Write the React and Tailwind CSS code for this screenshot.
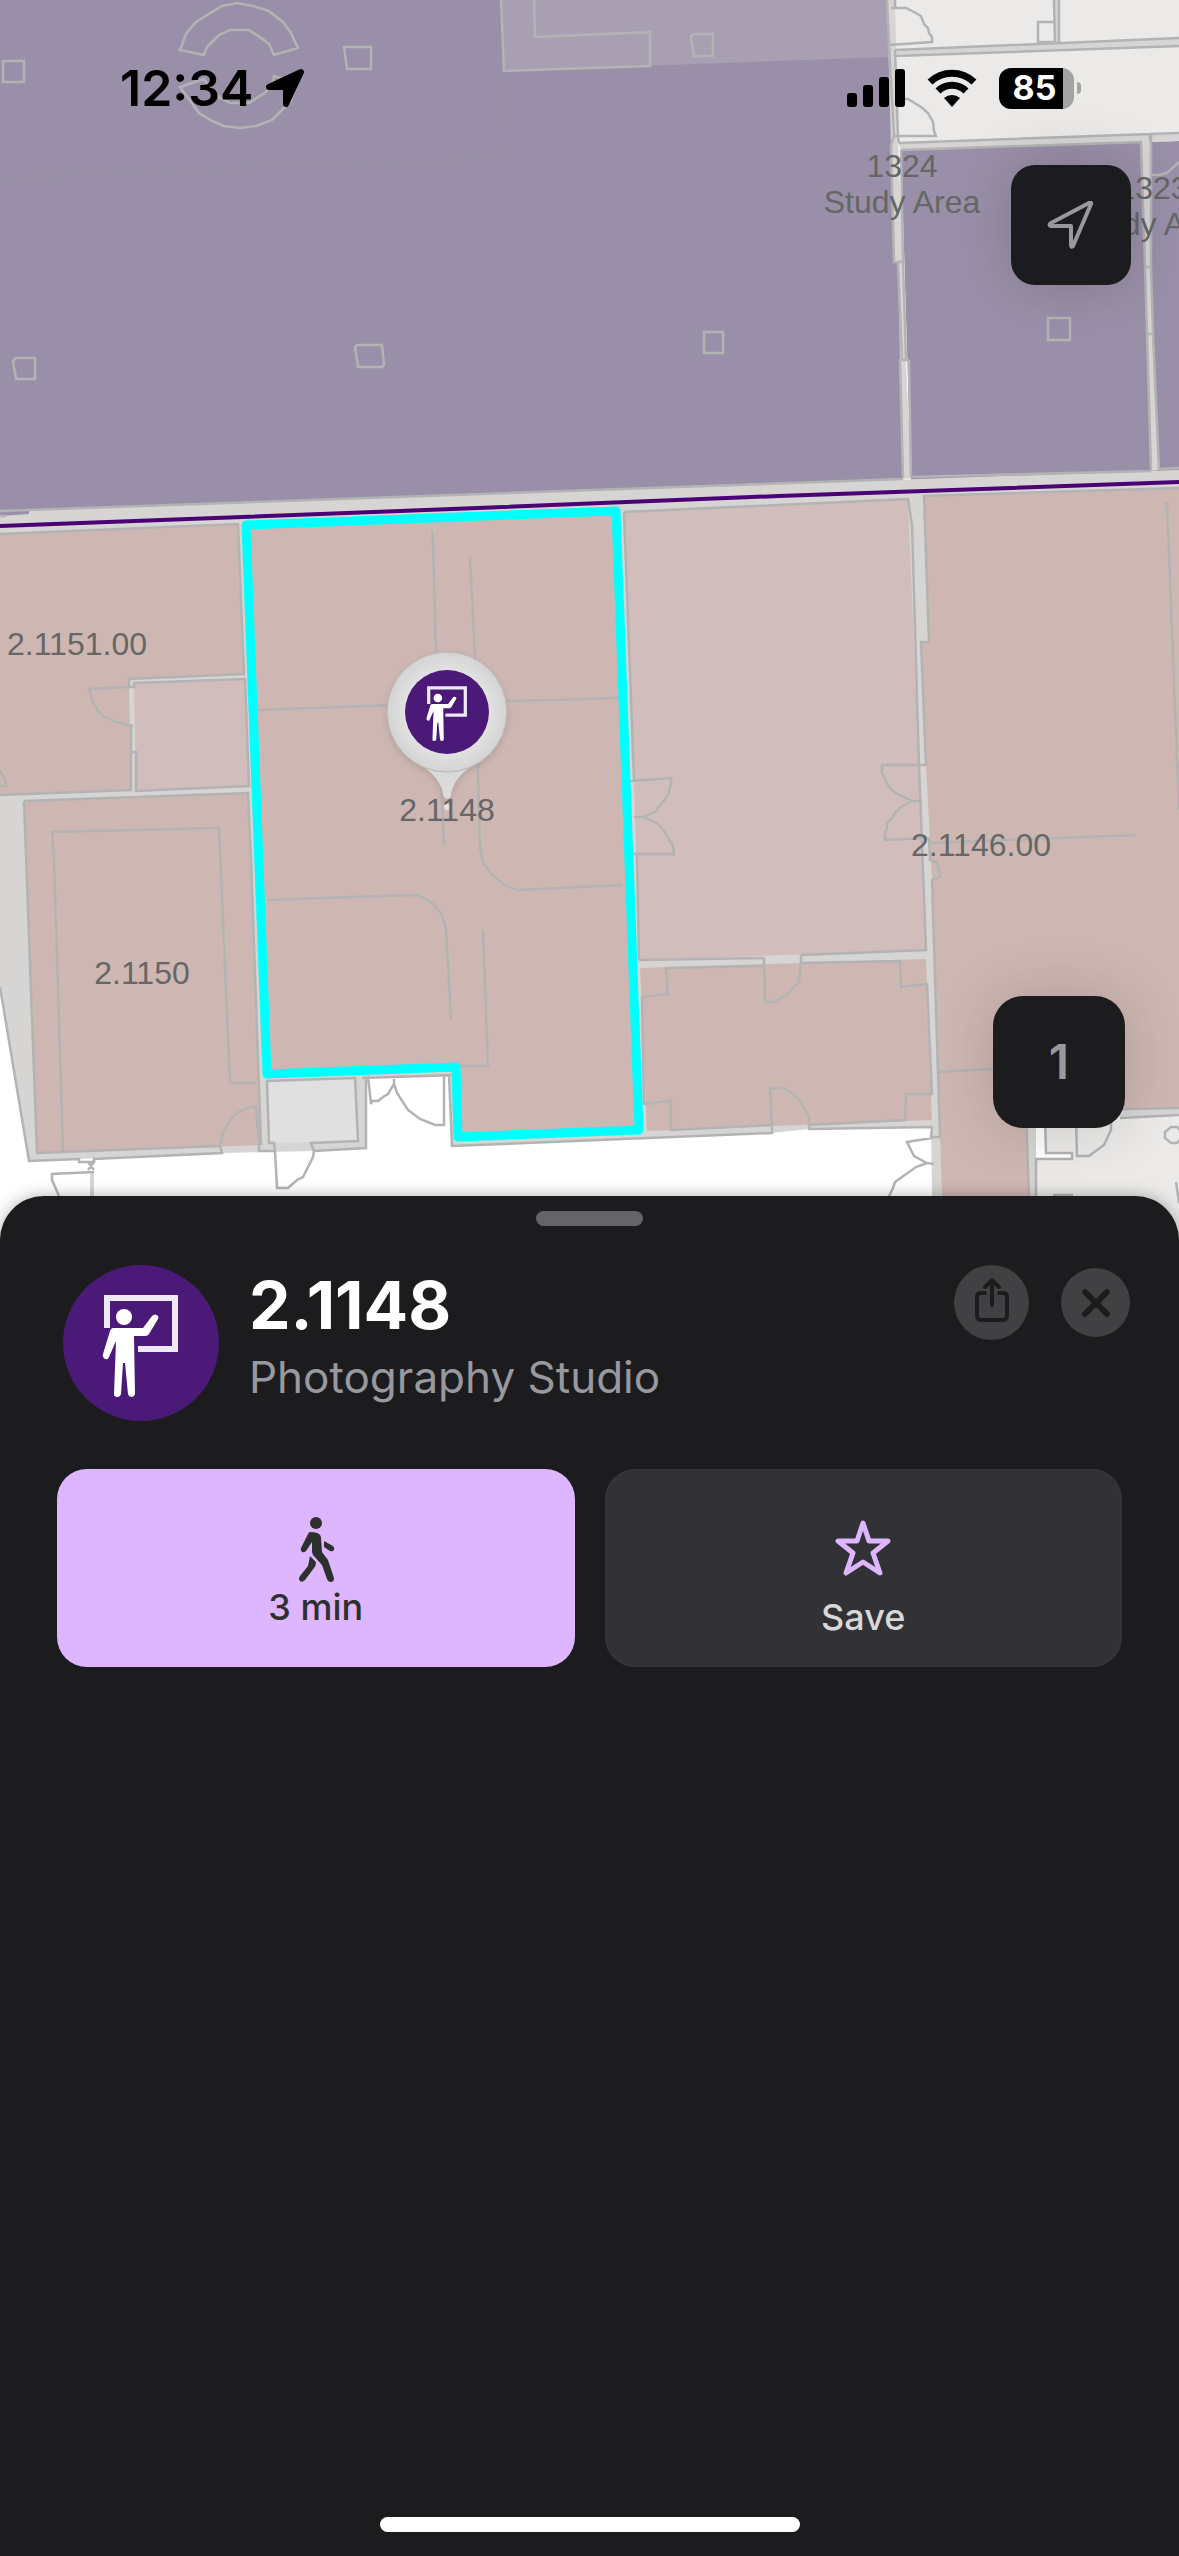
import React from 'react';

const ROOM = '#ceb7b2';
const ROOM_LIGHT = '#d1bdbb';
const WALL = '#d6d5d3';
const LINE = '#b3b3b3';
const STUDY = '#998fa8';
const HALL = '#ebeae8';

// filled areas of the floor plan, drawn bottom to top
const AREAS = [
  { fill: STUDY, points: '0,0 888,0 911,478 0,511' },
  { fill: '#a89fb2', points: '501,0 888,0 889,57 504,71' },
  { fill: HALL, points: '888,0 1179,0 1179,141 899,150' },
  { fill: STUDY, points: '901,150 1179,141 1179,480 911,480' },
  { fill: WALL, points: '0,511 1179,470 1179,1116 1036,1118 1036,1260 933,1260 931,1127 809,1129 772,1133 452,1146 449,1075 366,1077 366,1148 314,1151 222,1153 29,1161 0,987' },
  { fill: STUDY, points: '0,509 29,509 29,514 0,516' },
  { fill: ROOM, points: '0,534 238,524 244,674 129,679 131,790 0,795' },
  { fill: ROOM_LIGHT, points: '134,683 245,679 249,786 136,791' },
  { fill: ROOM, points: '24,801 248,793 251,860 260,1145 37,1153' },
  { fill: '#e0e0e0', points: '267,1081 355,1078 358,1141 269,1143' },
  { fill: ROOM, points: '246,525 616,511 639,1130 458,1137 456,1067 267,1074' },
  { fill: ROOM_LIGHT, points: '624,512 908,499 919,765 926,950 639,960 634,780' },
  { fill: ROOM, points: '640,968 926,959 932,1120 647,1131' },
  { fill: ROOM, points: '924,496 1179,488 1179,1108 1026,1111 1030,1260 944,1260 932,880 926,765 921,642 929,642' },
  { fill: HALL, points: '1045,1118 1179,1116 1179,1260 1036,1260 1036,1159 1072,1159 1072,1153 1046,1153' },
];

// narrow walls that sit on top of the study areas
const WALLS = [
  '887,0 895,0 898,137 903,262 906,360 911,478 903,479 900,360 898,262 894,262 891,145',
  '895,50 1179,38 1179,46 895,56',
  '1054,0 1059,0 1059,43 1055,43',
  '899,143 1150,134 1179,133 1179,141 901,150',
  '1140,142 1150,134 1151,267 1153,334 1159,470 1151,471 1147,334 1145,267',
];

const LINES = [
  // furniture and columns in the study hall
  'M3 61H24V82H3Z',
  'M344 47H371V69H347Z',
  'M13 361L16 358H35V379H16Z',
  'M355 347L357 345H382L384 365L382 367H358Z',
  'M691 36L694 34H713V56H694Z',
  'M704 332H723V353H704Z',
  'M1048 318H1070V340H1048Z',
  'M180 50L186 34L196 22L222 6L237 3L253 6L269 11L283 22L291 33L298 48L274 55L269 44L264 40L249 30H230L219 35L207 47L204 55Z',
  'M180 87L204 79L209 87L220 98L230 103H249L266 92L273 81L274 76L298 83L290 102L272 120L256 126L240 128L224 126L212 121L199 113Z',
  'M501 0L504 71L650 66V32L535 37L534 0',
  // walls and doors, top right
  'M887 0L889 45L894 136L891 145L894 262H903M895 0V8M891 8H906L914 12L921 16L924 24L928 28L929 33L932 37V42L889 45',
  'M895 50L1179 38M895 56L1179 46M895 50L898 137L899 143',
  'M904 99H908L921 107L928 113L933 122L934 131L936 136H894',
  'M898 262L902 360M903 262L906 360M909 360H900L903 478M909 360L911 478',
  'M1054 0L1055 43M1059 0V43M1055 22H1038V42H1055',
  'M899 143L1150 134V141M901 150L1141 142L1145 267H1151V134L1179 133M901 150L903 262',
  'M1151 175H1159L1167 173L1179 162M1145 267L1147 334H1153L1159 470M1151 267L1153 334M1147 334L1151 471',
  // corridor wall
  'M0 511L903 479M911 477L1151 471M1159 469L1179 468M0 516H6',
  // 2.1151.00
  'M0 534L238 524L244 674L129 679V687H134V683L245 679L249 786L136 791V752H132M0 795L131 790V726',
  'M128 687L89 689L93 702L98 711L105 717L116 722L122 723L128 726L133 725M0 770L5 780L6 786H0',
  // 2.1150
  'M24 801L248 793L251 860L261 1145M24 801L37 1153L220 1146',
  'M63 1152L54 860L52 832L219 828L230 1083H256',
  'M220 1147L222 1135L230 1120L237 1113L250 1107H256L259 1143',
  'M0 987L29 1161L79 1159V1162H94V1159L222 1153L220 1146M88 1162L94 1170M94 1162L88 1170',
  'M94 1172L52 1174V1180L59 1196',
  // service closet
  'M366 1077V1148L314 1151L311 1143L358 1141L355 1078L267 1081L269 1143H274L275 1151H259V1143',
  'M275 1151L277 1188H288L297 1180L303 1177L313 1157L314 1151',
  'M362 1078L456 1075M368 1076L371 1104L372 1101H378L383 1097L388 1094L394 1084V1076M394 1084L397 1093L408 1110L420 1119L435 1125H444V1074M449 1075L452 1146L772 1133V1125',
  // selected room, partitions
  'M258 710L447 703L618 698',
  'M432 530L433 543L436 653L444 846M470 557L475 657L480 848L483 863L491 874L504 885L517 890L622 885',
  'M267 900L380 896L418 895L432 903L441 913L446 928L451 1020M483 930L488 1066H460',
  // room next to it
  'M624 512L908 499L912 525L919 765L926 950L801 955M639 960L764 958M624 512L634 780M637 855L639 960',
  'M630 781L671 778V783L668 795L662 803L655 812L643 817H634M643 817L657 823L664 831L673 846L674 854H633',
  'M926 765H882V773L889 787L895 793L912 801H921M912 801L901 807L895 813L892 818L887 823V828L885 833V840L929 838',
  'M764 958L765 1002H773L779 999L788 994L799 982L801 963V955M764 966L666 968L668 994L642 997L644 1104L671 1101V1130L772 1125L770 1088H784L793 1094L801 1102L809 1117V1129L932 1127',
  'M801 963L900 961L901 987L927 984L932 1094H906L905 1120L809 1125',
  // 2.1146.00
  'M1179 488L924 496L929 642H921L926 765M929 838L930 860L937 862L940 877L932 880L940 1137H931L932 1127',
  'M1166 502V510M1167 502L1179 810M931 843L1135 835M937 1072L993 1069',
  'M932 1138L907 1142L911 1150L914 1156L927 1163L934 1164M927 1163L916 1167L895 1182L893 1188L889 1196',
  'M1026 1111L1029 1196M1036 1111L1179 1108M1120 1118L1179 1115M1045 1118L1046 1153H1072V1159H1036V1200',
  'M1076 1118L1077 1156H1089L1104 1145L1111 1130V1118M1053 1195H1073M1176 1182L1179 1203',
  'M1171 1127H1177L1182 1132V1138L1177 1143H1171L1165 1138V1132Z',
];

const LABELS = [
  { x: 902, y: 177, text: '1324' },
  { x: 902, y: 213, text: 'Study Area' },
  { x: 1153, y: 199, text: '1323' },
  { x: 1153, y: 235, text: 'Study Area' },
  { x: 77, y: 655, text: '2.1151.00' },
  { x: 447, y: 821, text: '2.1148' },
  { x: 142, y: 984, text: '2.1150' },
  { x: 981, y: 856, text: '2.1146.00' },
];

const ClassroomIcon = (props) => (
  <svg viewBox="0 0 156 156" {...props}>
    <circle cx="78" cy="78" r="78" fill="#4b1a78" />
    <path d="M44 63V33H112V84H75" fill="none" stroke="#efe8f6" strokeWidth="6" />
    <circle cx="61" cy="52" r="8" fill="#fff" />
    <path
      d="M50 63H80L89 51Q92 48 95 51Q96 52 95 54L86 69Q85 71 82 71H71L72 129Q71 132 69 132Q66 132 65 129L62 98H60L58 129Q57 132 54 132Q51 132 51 129L53 76L46 92Q45 95 42 94Q39 92 40 89L47 66Q48 63 50 63Z"
      fill="#fff"
    />
  </svg>
);

const FloorMap = () => (
  <svg
    viewBox="0 0 1179 1260"
    preserveAspectRatio="xMidYMin slice"
    className="absolute inset-0 h-full w-full"
    role="img"
    aria-label="Floor plan"
  >
    <defs>
      <radialGradient id="pin">
        <stop offset="0.6" stopColor="#e6e6e6" />
        <stop offset="1" stopColor="#d3d3d3" />
      </radialGradient>
    </defs>
    <rect width="1179" height="1260" fill="#fff" />
    {AREAS.map((a) => (
      <polygon key={a.points} points={a.points} fill={a.fill} />
    ))}
    {WALLS.map((points) => (
      <polygon key={points} points={points} fill={WALL} />
    ))}
    <path d="M90 1172H94V1200H90ZM262 1076H267L269 1149H259Z" fill={WALL} />
    <path d="M0 178L506 158L504 82" fill="none" stroke="#9d93ab" />
    <path d={LINES.join('')} fill="none" stroke={LINE} strokeWidth="2.5" />
    <path d="M0 526L400 511L779 496L1179 482" fill="none" stroke="#4b0076" strokeWidth="4" />
    <path
      d="M246 525L616 511L639 1130L458 1137L456 1067L267 1074Z"
      fill="none"
      stroke="#00ffff"
      strokeWidth="9"
      strokeLinejoin="round"
    />
    <g className="drop-shadow-md">
      <path d="M417 762Q442 778 443 796Q447 802 451 796Q452 778 477 762Z" fill="#dadada" />
      <circle cx="447" cy="712" r="60" fill="url(#pin)" stroke="#b9b5b4" />
    </g>
    <ClassroomIcon x="405" y="670" width="84" height="84" />
    <circle cx="447" cy="807" r="3" fill="#e6e2e0" />
    <g fill="#666" fontSize="32" textAnchor="middle" className="font-['Liberation_Sans',Arial,sans-serif]">
      {LABELS.map((l) => (
        <text key={`${l.x}-${l.y}`} x={l.x} y={l.y}>{l.text}</text>
      ))}
    </g>
  </svg>
);

const StatusBar = () => (
  <div className="relative flex items-center justify-between pt-14 pl-[120px] pr-[98px]">
    <div className="flex items-center gap-3">
      <span className="text-[50px] leading-16 font-semibold">12:34</span>
      <svg viewBox="0 0 40 40" className="h-10 w-10">
        <path d="M36 4L21 36V19H4Z" stroke="#000" strokeWidth="6" strokeLinejoin="round" />
      </svg>
    </div>
    <div className="flex items-center gap-[22px]">
      <svg viewBox="0 0 58 38" className="h-[38px] w-[58px]">
        <rect x="0" y="24" width="10" height="14" rx="3" />
        <rect x="16" y="16" width="10" height="22" rx="3" />
        <rect x="32" y="8" width="10" height="30" rx="3" />
        <rect x="48" y="0" width="10" height="38" rx="3" />
      </svg>
      <svg viewBox="0 0 50 38" className="h-[38px] w-[50px]">
        <path d="M3 13A32 32 0 0 1 47 13M11 22A20 20 0 0 1 39 22" fill="none" stroke="#000" strokeWidth="7" />
        <path d="M17 29A12 12 0 0 1 33 29L25 38Z" />
      </svg>
      <div className="flex items-center gap-[3px]">
        <div className="flex h-[41px] w-[75px] items-center justify-center rounded-xl bg-linear-to-r from-black from-85% to-[#a3a3a2] to-85% pr-1 text-[34px] leading-10 font-bold text-white">
          85
        </div>
        <div className="h-3 w-1 rounded-r-full bg-[#a3a3a2]" />
      </div>
    </div>
  </div>
);

export default function App() {
  return (
    <div className="flex min-h-screen flex-col bg-[#1c1c1e] font-[Inter,sans-serif] text-black">
      <section className="relative h-[1260px] shrink-0 overflow-hidden">
        <FloorMap />
        <StatusBar />
        <button
          aria-label="Locate me"
          className="absolute top-[165px] right-12 flex h-[120px] w-[120px] items-center justify-center rounded-3xl bg-[#1c1c1e] shadow-[0_0_60px_rgba(0,0,0,0.16)]"
        >
          <svg viewBox="0 0 48 48" className="h-12 w-12">
            <path d="M44 3L26 45Q24 47 24 44V25H4Q1 24 4 22L42 2Q45 1 44 3Z" fill="none" stroke="#98989d" strokeWidth="4" strokeLinejoin="round" />
          </svg>
        </button>
        <button
          aria-label="Floor 1"
          className="absolute top-[996px] right-[54px] h-[132px] w-[132px] rounded-[30px] bg-[#1c1c1e] text-5xl font-semibold text-[#98989d] shadow-[0_0_60px_rgba(0,0,0,0.16)]"
        >
          1
        </button>
      </section>

      <main className="relative -mt-16 flex flex-1 flex-col rounded-t-[44px] bg-[#1c1c1e] px-[57px] pt-[15px] pb-6 shadow-[0_0_16px_rgba(0,0,0,0.3)]">
        <div className="h-[15px] w-[107px] self-center rounded-full bg-[#656468]" />

        <header className="mt-[39px] flex items-start pl-1.5">
          <ClassroomIcon className="h-[156px] w-[156px] shrink-0" />
          <div className="ml-[30px] flex-1">
            <h1 className="text-[66px] leading-20 font-bold text-white">2.1148</h1>
            <p className="text-[44px] leading-16 text-[#98989f]">Photography Studio</p>
          </div>
          <div className="-mr-2 flex items-center gap-8">
            <button aria-label="Share" className="flex h-[75px] w-[75px] items-center justify-center rounded-full bg-[#414143] pb-1.5">
              <svg viewBox="0 0 36 46" className="h-[46px] w-9" fill="none" stroke="#1c1c1e" strokeWidth="4" strokeLinecap="round" strokeLinejoin="round">
                <path d="M11 16H7Q3 16 3 20V38Q3 43 7 43H29Q33 43 33 38V20Q33 16 29 16H25" />
                <path d="M18 28V3M11 10L18 3L25 10" />
              </svg>
            </button>
            <button aria-label="Close" className="flex h-[69px] w-[69px] items-center justify-center rounded-full bg-[#414143]">
              <svg viewBox="0 0 30 30" className="h-[30px] w-[30px]" stroke="#1c1c1e" strokeWidth="6" strokeLinecap="round">
                <path d="M4 4L26 26M26 4L4 26" />
              </svg>
            </button>
          </div>
        </header>

        <div className="mt-12 grid grid-cols-2 gap-[30px]">
          <button className="flex h-[198px] flex-col items-center justify-center gap-1 rounded-[30px] bg-[#deb6ff] pt-2 text-4xl font-medium text-[#2e302e]">
            <svg viewBox="0 0 38 66" className="h-[66px] w-[38px]" fill="currentColor">
              <circle cx="19" cy="6" r="6" />
              <path d="M13 15Q23 15 24 20L25 35L31 43L37 61Q37 65 34 65Q31 65 30 62L25 48L16 38Q15 36 15 34V25L9 34Q7 36 5 35Q3 33 4 31L11 17Q12 15 13 15Z" />
              <path d="M27 24L36 29Q38 31 37 33Q36 35 33 34L27 30ZM13 39L19 45Q19 49 17 51L8 63Q5 66 3 64Q1 62 3 59L11 49Z" />
            </svg>
            <span>3 min</span>
          </button>
          <button className="flex h-[198px] flex-col items-center justify-center gap-5 rounded-[30px] border-2 border-[#353438] bg-[#323136] pt-5 text-4xl font-medium text-[#d8d8d8]">
            <svg viewBox="0 0 58 58" className="h-[58px] w-[58px]" fill="none" stroke="#deb6ff" strokeWidth="5" strokeLinejoin="round">
              <path d="M29 4L35 22H54L39 34L46 54L29 43L12 54L19 34L4 22H23Z" />
            </svg>
            <span>Save</span>
          </button>
        </div>

        <div className="mt-auto h-[15px] w-[420px] self-center rounded-full bg-white" />
      </main>
    </div>
  );
}
